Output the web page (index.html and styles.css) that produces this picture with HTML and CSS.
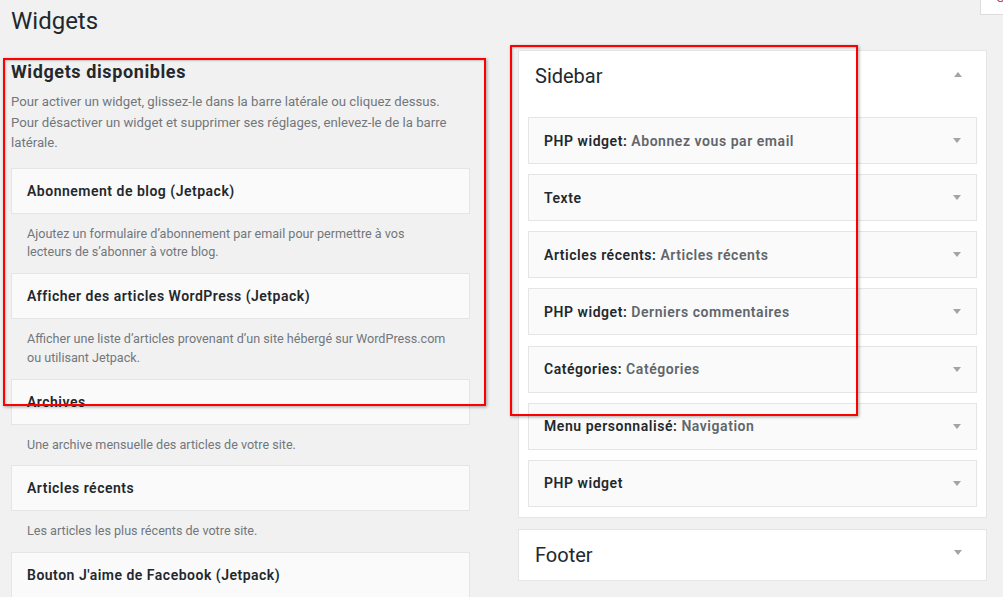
FILE: index.html
```html
<!DOCTYPE html>
<html lang="fr">
<head>
<meta charset="utf-8">
<title>Widgets</title>
<link rel="stylesheet" href="styles.css">
</head>
<body>
<header class="topbar">
  <h1>Widgets</h1>
  <div class="screen-tab"><span>O</span></div>
</header>

<main class="columns">
  <section class="available">
    <h2>Widgets disponibles</h2>
    <p class="intro">Pour activer un widget, glissez-le dans la barre latérale ou cliquez dessus.<br>Pour désactiver un widget et supprimer ses réglages, enlevez-le de la barre<br>latérale.</p>
    <ul class="widget-list">
      <li>
        <div class="widget-top"><h3>Abonnement de blog (Jetpack)</h3></div>
        <p class="widget-desc">Ajoutez un formulaire d’abonnement par email pour permettre à vos<br>lecteurs de s’abonner à votre blog.</p>
      </li>
      <li>
        <div class="widget-top"><h3>Afficher des articles WordPress (Jetpack)</h3></div>
        <p class="widget-desc">Afficher une liste d’articles provenant d’un site hébergé sur WordPress.com<br>ou utilisant Jetpack.</p>
      </li>
      <li>
        <div class="widget-top"><h3>Archives</h3></div>
        <p class="widget-desc">Une archive mensuelle des articles de votre site.</p>
      </li>
      <li>
        <div class="widget-top"><h3>Articles récents</h3></div>
        <p class="widget-desc">Les articles les plus récents de votre site.</p>
      </li>
      <li>
        <div class="widget-top"><h3>Bouton J'aime de Facebook (Jetpack)</h3></div>
        <p class="widget-desc">Utilisez la boîte J’aime de Facebook pour afficher votre page.</p>
      </li>
    </ul>
  </section>

  <section class="areas">
    <div class="area">
      <div class="area-head"><h2>Sidebar</h2><span class="arrow up"></span></div>
      <div class="area-widgets">
        <div class="w"><h3><b>PHP widget:</b> <span>Abonnez vous par email</span></h3><span class="arrow down"></span></div>
        <div class="w"><h3><b>Texte</b></h3><span class="arrow down"></span></div>
        <div class="w"><h3><b>Articles récents:</b> <span>Articles récents</span></h3><span class="arrow down"></span></div>
        <div class="w"><h3><b>PHP widget:</b> <span>Derniers commentaires</span></h3><span class="arrow down"></span></div>
        <div class="w"><h3><b>Catégories:</b> <span>Catégories</span></h3><span class="arrow down"></span></div>
        <div class="w"><h3><b>Menu personnalisé:</b> <span>Navigation</span></h3><span class="arrow down"></span></div>
        <div class="w"><h3><b>PHP widget</b></h3><span class="arrow down"></span></div>
      </div>
    </div>
    <div class="area closed">
      <div class="area-head"><h2>Footer</h2><span class="arrow down big"></span></div>
    </div>
  </section>
</main>

<div class="mark mark-left"></div>
<div class="mark mark-right"></div>
</body>
</html>
```

FILE: styles.css
```css
* { box-sizing: border-box; }

html, body {
  margin: 0;
  padding: 0;
}

body {
  background: #f1f1f1;
  color: #23282d;
  font-family: Roboto, "Liberation Sans", sans-serif;
  font-size: 13px;
  position: relative;
  min-height: 700px;
}

.topbar {
  display: flex;
  justify-content: space-between;
  align-items: flex-start;
  padding-left: 11px;
}

.topbar h1 {
  margin: 0;
  padding-top: 7px;
  font-size: 24px;
  line-height: 29px;
  font-weight: 400;
  color: #23282d;
}

.screen-tab {
  width: 23px;
  height: 15px;
  background: #fff;
  border-left: 1px solid #dcdcdc;
  border-bottom: 1px solid #dcdcdc;
  overflow: hidden;
  padding-left: 15px;
}

.screen-tab span {
  display: block;
  font-size: 13px;
  line-height: 13px;
  margin-top: -9px;
  color: #b04a6a;
}

.columns {
  display: flex;
  gap: 48px;
  padding-left: 11px;
  margin-top: 14px;
}

/* Left column */
.available {
  width: 459px;
  flex: none;
}

.available h2 {
  margin: 10px 0 0;
  font-size: 18px;
  line-height: 24px;
  font-weight: 700;
  letter-spacing: 0.6px;
  color: #23282d;
}

.intro {
  margin: 8px 0 0;
  font-size: 13.2px;
  line-height: 20.5px;
  color: #72777c;
}

.widget-list {
  list-style: none;
  margin: 14px 0 0;
  padding: 0;
}

.widget-top {
  height: 46px;
  background: #fafafa;
  border: 1px solid #e5e5e5;
  padding: 0 15px;
  display: flex;
  align-items: center;
}

.widget-top h3 {
  margin: 0;
  font-size: 14px;
  font-weight: 600;
  letter-spacing: 0.5px;
  color: #23282d;
}

.widget-desc {
  margin: 0;
  padding: 11px 16px;
  font-size: 12.6px;
  line-height: 18.75px;
  color: #72777c;
}

/* Right column */
.areas {
  width: 469px;
  flex: none;
  display: flex;
  flex-direction: column;
  gap: 11px;
}

.area {
  background: #fff;
  border: 1px solid #e5e5e5;
}

.area-head {
  height: 50px;
  display: flex;
  align-items: center;
  justify-content: space-between;
  padding: 0 24px 0 16px;
}

.area-head h2 {
  margin: 0;
  font-size: 20px;
  font-weight: 400;
  color: #23282d;
}

.area-widgets {
  padding: 16px 9px 10px;
  display: flex;
  flex-direction: column;
  gap: 10.17px;
}

.w {
  height: 47px;
  background: #fafafa;
  border: 1px solid #e5e5e5;
  display: flex;
  align-items: center;
  justify-content: space-between;
  padding: 0 15px 0 15px;
}

.w h3 {
  margin: 0;
  font-size: 14px;
  font-weight: 600;
  letter-spacing: 0.55px;
  color: #60666b;
}

.w h3 b {
  font-weight: 600;
  color: #23282d;
}

.arrow {
  width: 0;
  height: 0;
  border-left: 4px solid transparent;
  border-right: 4px solid transparent;
  flex: none;
}

.arrow.up {
  border-bottom: 5px solid #a0a5aa;
  margin-bottom: 4px;
}

.arrow.down {
  border-top: 5px solid #a0a5aa;
}

.arrow.big {
  margin-bottom: 4px;
}

/* Annotation marks */
.mark {
  position: absolute;
  border: 2px solid #f00;
  box-shadow: 1px 1px 3px rgba(0, 0, 0, 0.35), inset 1px 1px 2px rgba(0, 0, 0, 0.2);
  pointer-events: none;
}

.mark-left {
  left: 3px;
  top: 58px;
  width: 483px;
  height: 348px;
}

.mark-right {
  left: 510px;
  top: 45px;
  width: 348px;
  height: 371px;
}
```
